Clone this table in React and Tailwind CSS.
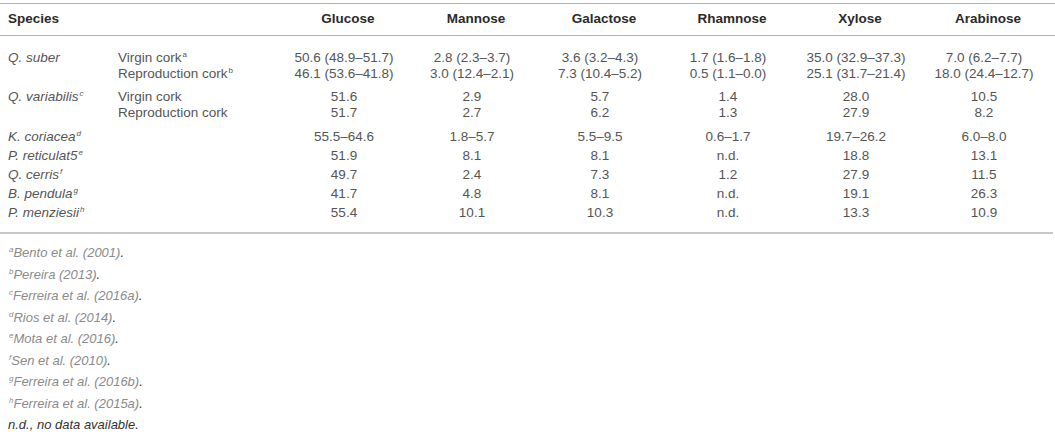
const cols = "grid grid-cols-[118px_162px_repeat(6,128px)] items-center";

const groups = [
  {
    species: "Q. suber",
    rows: [
      { label: "Virgin cork", sup: "a", vals: ["50.6 (48.9–51.7)", "2.8 (2.3–3.7)", "3.6 (3.2–4.3)", "1.7 (1.6–1.8)", "35.0 (32.9–37.3)", "7.0 (6.2–7.7)"] },
      { label: "Reproduction cork", sup: "b", vals: ["46.1 (53.6–41.8)", "3.0 (12.4–2.1)", "7.3 (10.4–5.2)", "0.5 (1.1–0.0)", "25.1 (31.7–21.4)", "18.0 (24.4–12.7)"] },
    ],
  },
  {
    species: "Q. variabilis",
    sup: "c",
    rows: [
      { label: "Virgin cork", vals: ["51.6", "2.9", "5.7", "1.4", "28.0", "10.5"] },
      { label: "Reproduction cork", vals: ["51.7", "2.7", "6.2", "1.3", "27.9", "8.2"] },
    ],
  },
];

const singles = [
  { species: "K. coriacea", sup: "d", vals: ["55.5–64.6", "1.8–5.7", "5.5–9.5", "0.6–1.7", "19.7–26.2", "6.0–8.0"] },
  { species: "P. reticulat5", sup: "e", vals: ["51.9", "8.1", "8.1", "n.d.", "18.8", "13.1"] },
  { species: "Q. cerris", sup: "f", vals: ["49.7", "2.4", "7.3", "1.2", "27.9", "11.5"] },
  { species: "B. pendula", sup: "g", vals: ["41.7", "4.8", "8.1", "n.d.", "19.1", "26.3"] },
  { species: "P. menziesii", sup: "h", vals: ["55.4", "10.1", "10.3", "n.d.", "13.3", "10.9"] },
];

const notes = [
  ["a", "Bento et al. (2001)"],
  ["b", "Pereira (2013)"],
  ["c", "Ferreira et al. (2016a)"],
  ["d", "Rios et al. (2014)"],
  ["e", "Mota et al. (2016)"],
  ["f", "Sen et al. (2010)"],
  ["g", "Ferreira et al. (2016b)"],
  ["h", "Ferreira et al. (2015a)"],
];

function Sup({ children }) {
  return <sup className="text-[8px] -top-[5px] ml-[1px]">{children}</sup>;
}

function Values({ vals }) {
  return vals.map((v, i) => (
    <div key={i} className="text-center">{v}</div>
  ));
}

export default function App() {
  return (
    <div className="w-[1055px] h-[432px] bg-white text-[#555] text-[13.5px] overflow-hidden" style={{ fontFamily: '"Liberation Sans", Arial, sans-serif' }}>
      <div className="pt-[3px]">
        {/* header */}
        <div className={`${cols} h-[33px] border-t border-b border-[#b5b5b5] font-bold text-[#2a2a2a] pl-[8px]`}>
          <div className="col-span-2">Species</div>
          <div className="text-center -ml-[8px]">Glucose</div>
          <div className="text-center -ml-[8px]">Mannose</div>
          <div className="text-center -ml-[8px]">Galactose</div>
          <div className="text-center -ml-[8px]">Rhamnose</div>
          <div className="text-center -ml-[8px]">Xylose</div>
          <div className="text-center -ml-[8px]">Arabinose</div>
        </div>

        {/* body */}
        <div className="pt-[14px] pb-[10px] border-b-2 border-[#c8c8c8] w-[1053px]">
          {groups.map((g, gi) => (
            <div key={gi} className={gi > 0 ? "mt-[7px]" : ""}>
              {g.rows.map((r, ri) => (
                <div key={ri} className={`${cols} h-[16px] leading-[16px]`}>
                  <div className="italic pl-[8px]">
                    {ri === 0 && (
                      <>
                        {g.species}
                        {g.sup && <Sup>{g.sup}</Sup>}
                      </>
                    )}
                  </div>
                  <div>
                    {r.label}
                    {r.sup && <Sup>{r.sup}</Sup>}
                  </div>
                  <Values vals={r.vals} />
                </div>
              ))}
            </div>
          ))}
          <div className="mt-[6px]">
            {singles.map((s, si) => (
              <div key={si} className={`${cols} h-[19px] leading-[19px]`}>
                <div className="italic pl-[8px] col-span-2">
                  {s.species}
                  <Sup>{s.sup}</Sup>
                </div>
                <Values vals={s.vals} />
              </div>
            ))}
          </div>
        </div>

        {/* footnotes */}
        <div className="pt-[8px] pl-[8px] text-[13px] italic leading-[21.5px]">
          {notes.map(([k, t]) => (
            <div key={k}>
              <span className="text-[#8a8a8a]">
                <Sup>{k}</Sup>
                {t}
              </span>
              <span className="text-[#333]">.</span>
            </div>
          ))}
          <div className="text-[#333]">n.d., no data available.</div>
        </div>
      </div>
    </div>
  );
}
